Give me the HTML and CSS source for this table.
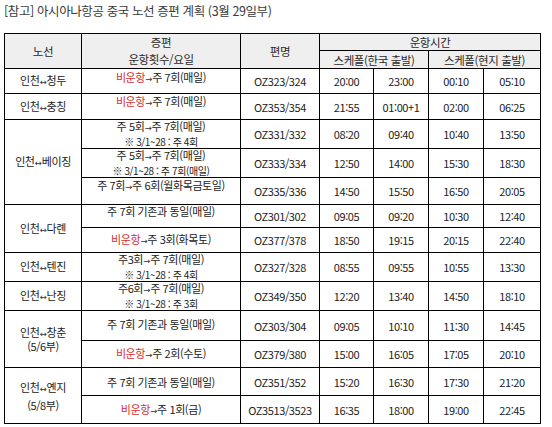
FILE: index.html
```html
<!DOCTYPE html>
<html lang="ko">
<head>
<meta charset="utf-8">
<link rel="stylesheet" href="styles.css">
</head>
<body>
<div class="page">
  <p class="title">[참고] 아시아나항공 중국 노선 증편 계획 (3월 29일부)</p>
  <table class="sched">
    <colgroup>
      <col class="c-route"><col class="c-chg"><col class="c-flt"><col class="c-t1"><col class="c-t2"><col class="c-t3"><col class="c-t4">
    </colgroup>
    <thead>
      <tr class="hr1">
        <th rowspan="2">노선</th>
        <th rowspan="2" class="hdr2">증편<br>운항횟수/요일</th>
        <th rowspan="2">편명</th>
        <th colspan="4">운항시간</th>
      </tr>
      <tr class="hr2">
        <th colspan="2">스케폴(한국 출발)</th>
        <th colspan="2">스케폴(현지 출발)</th>
      </tr>
    </thead>
    <tbody>
      <tr class="h25">
        <td class="route">인천<span class="ar">↔</span>청두</td>
        <td class="chg top p2"><span class="red">비운항</span><span class="ar">→</span>주 7회(매일)</td>
        <td class="flt">OZ323/324</td><td class="tm">20:00</td><td class="tm">23:00</td><td class="tm">00:10</td><td class="tm">05:10</td>
      </tr>
      <tr class="h26">
        <td class="route">인천<span class="ar">↔</span>충칭</td>
        <td class="chg top p1"><span class="red">비운항</span><span class="ar">→</span>주 7회(매일)</td>
        <td class="flt">OZ353/354</td><td class="tm">21:55</td><td class="tm">01:00+1</td><td class="tm">02:00</td><td class="tm">06:25</td>
      </tr>
      <tr class="h28">
        <td class="route" rowspan="3">인천<span class="ar">↔</span>베이징</td>
        <td class="chg two top p0">주 5회<span class="ar">→</span>주 7회(매일)<br><span class="note">※ 3/1~28 : 주 4회</span></td>
        <td class="flt">OZ331/332</td><td class="tm">08:20</td><td class="tm">09:40</td><td class="tm">10:40</td><td class="tm">13:50</td>
      </tr>
      <tr class="h27">
        <td class="chg two top p0">주 5회<span class="ar">→</span>주 7회(매일)<br><span class="note">※ 3/1~28 : 주 7회(매일)</span></td>
        <td class="flt">OZ333/334</td><td class="tm">12:50</td><td class="tm">14:00</td><td class="tm">15:30</td><td class="tm">18:30</td>
      </tr>
      <tr class="h27">
        <td class="chg top p1">주 7회<span class="ar">→</span>주 6회(월화목금토일)</td>
        <td class="flt">OZ335/336</td><td class="tm">14:50</td><td class="tm">15:50</td><td class="tm">16:50</td><td class="tm">20:05</td>
      </tr>
      <tr class="h23">
        <td class="route" rowspan="2">인천<span class="ar">↔</span>다롄</td>
        <td class="chg top p0">주 7회 기존과 동일(매일)</td>
        <td class="flt">OZ301/302</td><td class="tm">09:05</td><td class="tm">09:20</td><td class="tm">10:30</td><td class="tm">12:40</td>
      </tr>
      <tr class="h25">
        <td class="chg"><span class="red">비운항</span><span class="ar">→</span>주 3회(화목토)</td>
        <td class="flt">OZ377/378</td><td class="tm">18:50</td><td class="tm">19:15</td><td class="tm">20:15</td><td class="tm">22:40</td>
      </tr>
      <tr class="h27">
        <td class="route">인천<span class="ar">↔</span>텐진</td>
        <td class="chg two">주3회<span class="ar">→</span>주 7회(매일)<br><span class="note">※ 3/1~28 : 주 4회</span></td>
        <td class="flt">OZ327/328</td><td class="tm">08:55</td><td class="tm">09:55</td><td class="tm">10:55</td><td class="tm">13:30</td>
      </tr>
      <tr class="h26">
        <td class="route">인천<span class="ar">↔</span>난징</td>
        <td class="chg two">주6회<span class="ar">→</span>주 7회(매일)<br><span class="note">※ 3/1~28 : 주 3회</span></td>
        <td class="flt">OZ349/350</td><td class="tm">12:20</td><td class="tm">13:40</td><td class="tm">14:50</td><td class="tm">18:10</td>
      </tr>
      <tr class="h30">
        <td class="route two" rowspan="2">인천<span class="ar">↔</span>창춘<br>(5/6부)</td>
        <td class="chg pb4">주 7회 기존과 동일(매일)</td>
        <td class="flt">OZ303/304</td><td class="tm">09:05</td><td class="tm">10:10</td><td class="tm">11:30</td><td class="tm">14:45</td>
      </tr>
      <tr class="h27">
        <td class="chg"><span class="red">비운항</span><span class="ar">→</span>주 2회(수토)</td>
        <td class="flt">OZ379/380</td><td class="tm">15:00</td><td class="tm">16:05</td><td class="tm">17:05</td><td class="tm">20:10</td>
      </tr>
      <tr class="h28">
        <td class="route two wide" rowspan="2">인천<span class="ar">↔</span>옌지<br>(5/8부)</td>
        <td class="chg">주 7회 기존과 동일(매일)</td>
        <td class="flt">OZ351/352</td><td class="tm">15:20</td><td class="tm">16:30</td><td class="tm">17:30</td><td class="tm">21:20</td>
      </tr>
      <tr class="h28">
        <td class="chg"><span class="red">비운항</span><span class="ar">→</span>주 1회(금)</td>
        <td class="flt">OZ3513/3523</td><td class="tm">16:35</td><td class="tm">18:00</td><td class="tm">19:00</td><td class="tm">22:45</td>
      </tr>
    </tbody>
  </table>
</div>
</body>
</html>
```

FILE: styles.css
```css
html, body {
  margin: 0;
  padding: 0;
  background: #ffffff;
}

body {
  font-family: "Noto Sans CJK KR", "Noto Sans", sans-serif;
  color: #222222;
}

.page {
  padding: 3px 4px 0 4px;
}

.title {
  margin: 0 0 14px 0;
  font-size: 12.5px;
  line-height: 16px;
  letter-spacing: -0.4px;
  color: #3a3a3a;
}

.sched {
  border-collapse: collapse;
  table-layout: fixed;
  width: 536px;
  font-size: 11px;
  line-height: 12px;
  letter-spacing: -0.4px;
}

.c-route { width: 77px; }
.c-chg { width: 159px; }
.c-flt { width: 79px; }
.c-t1 { width: 54px; }
.c-t2 { width: 55px; }
.c-t3 { width: 55px; }
.c-t4 { width: 57px; }

.sched th,
.sched td {
  border: 1px solid #000000;
  padding: 0;
  text-align: center;
  vertical-align: middle;
  white-space: nowrap;
}

.sched th {
  font-weight: normal;
  background: #efefef;
  color: #2a2a2a;
  font-size: 11.5px;
}

.hr1 { height: 17px; }
.hr2 { height: 18px; }

.hdr2 { line-height: 17px; }

.h23 { height: 23px; }
.h25 { height: 25px; }
.h26 { height: 26px; }
.h27 { height: 27px; }
.h28 { height: 28px; }
.h30 { height: 30px; }

.route.two { line-height: 12px; }
.route.wide { line-height: 16px; }

.chg { line-height: 12px; }
.chg.two { line-height: 12.5px; }
.chg.top { vertical-align: top; }
.chg.p0 { padding-top: 0; }
.chg.p1 { padding-top: 1px; }
.chg.p2 { padding-top: 2px; }
.chg.pb4 { padding-bottom: 4px; }

.flt { padding-left: 5px; }
.tm { padding-right: 6px; }

.red { color: #d42f2f; }

.ar {
  font-family: "DejaVu Sans", sans-serif;
  font-size: 8.5px;
  letter-spacing: 0;
  color: #333333;
}

.note { font-size: 10px; }
```
